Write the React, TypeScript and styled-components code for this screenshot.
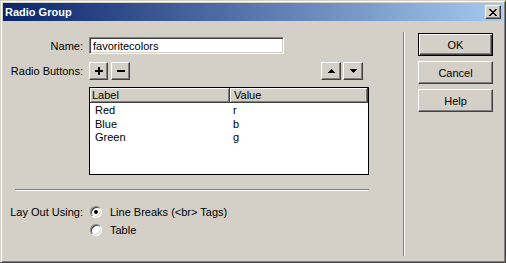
import React from "react";
import styled, { createGlobalStyle } from "styled-components";

const GlobalStyle = createGlobalStyle`
  html, body {
    margin: 0;
    padding: 0;
    background: #d4d0c8;
  }
  body {
    font-family: "Liberation Sans", Arial, sans-serif;
    font-size: 11px;
    color: #000;
  }
`;

const Window = styled.div`
  width: 506px;
  height: 263px;
  box-sizing: border-box;
  background: #d4d0c8;
  border: 1px solid;
  border-color: #d4d0c8 #404040 #404040 #d4d0c8;
  box-shadow: inset 1px 1px 0 #fff, inset -1px -1px 0 #808080;
  padding: 2px;
  display: flex;
  flex-direction: column;
`;

const TitleBar = styled.div`
  height: 18px;
  flex: 0 0 18px;
  display: flex;
  align-items: center;
  padding: 0 2px;
  background: linear-gradient(to right, #0a246a, #a6caf0);
  color: #fff;
  font-weight: bold;
  font-size: 11px;
`;

const Title = styled.span`
  flex: 1;
`;

const RaisedButton = styled.button`
  box-sizing: border-box;
  margin: 0;
  padding: 0;
  background: #d4d0c8;
  border: 1px solid;
  border-color: #fff #404040 #404040 #fff;
  box-shadow: inset -1px -1px 0 #808080;
  display: flex;
  align-items: center;
  justify-content: center;
  font: inherit;
  color: #000;
`;

const CloseButton = styled(RaisedButton)`
  width: 16px;
  height: 14px;
`;

const Body = styled.div`
  flex: 1;
  display: flex;
`;

const Main = styled.div`
  width: 400px;
  display: flex;
  flex-direction: column;
  padding-top: 16px;
`;

const Row = styled.div<{ $top?: number }>`
  display: flex;
  align-items: center;
  margin-top: ${(p) => p.$top ?? 0}px;
`;

const Label = styled.span`
  width: 80px;
  margin-right: 6px;
  text-align: right;
  white-space: nowrap;
`;

const TextField = styled.input`
  width: 195px;
  height: 17px;
  box-sizing: border-box;
  margin: 0;
  padding: 0 0 0 3px;
  background: #fff;
  border: 1px solid;
  border-color: #808080 #fff #fff #808080;
  box-shadow: inset 1px 1px 0 #404040, inset -1px -1px 0 #d4d0c8;
  font: inherit;
  color: #000;
  outline: none;
`;

const Controls = styled.div`
  width: 274px;
  display: flex;
  align-items: center;
`;

const ToolButton = styled(RaisedButton)<{ $w: number }>`
  width: ${(p) => p.$w}px;
  height: 18px;
  margin-right: ${(p) => (p.$w === 19 ? 3 : 2)}px;
  &:last-child {
    margin-right: 0;
  }
`;

const Spacer = styled.div`
  flex: 1;
`;

const Table = styled.div`
  margin: 7px 0 0 86px;
  width: 280px;
  height: 88px;
  box-sizing: border-box;
  border: 1px solid #000;
  background: #fff;
  display: flex;
  flex-direction: column;
`;

const HeaderRow = styled.div`
  display: flex;
  height: 15px;
  background: #d4d0c8;
`;

const HeaderCell = styled.div<{ $w?: number; $pad: number }>`
  box-sizing: border-box;
  ${(p) => (p.$w ? `width: ${p.$w}px;` : "flex: 1;")}
  height: 15px;
  line-height: 14px;
  padding-left: ${(p) => p.$pad}px;
  border-bottom: 1px solid #404040;
  border-right: 1px solid #404040;
  box-shadow: inset 1px 1px 0 #fff, inset -1px -1px 0 #808080;
`;

const Rows = styled.div`
  padding-top: 1px;
`;

const DataRow = styled.div`
  display: flex;
  height: 13.5px;
  line-height: 13.5px;
`;

const DataCell = styled.div<{ $w?: number; $pad: number }>`
  ${(p) => (p.$w ? `width: ${p.$w}px;` : "flex: 1;")}
  padding-left: ${(p) => p.$pad}px;
  box-sizing: border-box;
`;

const HLine = styled.div`
  margin: 14px 0 0 12px;
  width: 354px;
  height: 0;
  border-top: 1px solid #808080;
  border-bottom: 1px solid #fff;
`;

const LayoutRow = styled.div`
  display: flex;
  margin-top: 12px;
`;

const LayoutLabel = styled(Label)`
  height: 18px;
  line-height: 18px;
`;

const Options = styled.div`
  display: flex;
  flex-direction: column;
`;

const Option = styled.label`
  display: flex;
  align-items: center;
  height: 18px;
  padding-left: 1px;
`;

const RadioCircle = styled.span<{ $checked?: boolean }>`
  width: 12px;
  height: 12px;
  box-sizing: border-box;
  border-radius: 50%;
  border: 1px solid;
  border-color: #808080 #fff #fff #808080;
  background: #fff;
  box-shadow: inset 1px 1px 0 #404040, inset -1px -1px 0 #d4d0c8;
  display: flex;
  align-items: center;
  justify-content: center;
  margin-right: 8px;
  &::after {
    content: "";
    width: 4px;
    height: 4px;
    border-radius: 50%;
    background: #000;
    display: ${(p) => (p.$checked ? "block" : "none")};
  }
`;

const VLine = styled.div`
  margin: 11px 0 4px 0;
  width: 0;
  border-left: 1px solid #808080;
  border-right: 1px solid #fff;
`;

const ButtonColumn = styled.div`
  margin-left: 13px;
  padding-top: 12px;
  display: flex;
  flex-direction: column;
  gap: 5px;
`;

const DialogButton = styled(RaisedButton)<{ $default?: boolean }>`
  width: 75px;
  height: 23px;
  ${(p) =>
    p.$default
      ? `
    border: 1px solid #000;
    box-shadow: inset 1px 1px 0 #fff, inset -1px -1px 0 #404040, inset -2px -2px 0 #808080;
  `
      : ""}
`;

// pixel glyphs for the tiny buttons (not text)
const pixelPath = (rows: string[]) =>
  rows
    .flatMap((r, y) =>
      r.split("").map((c, x) => (c === "#" ? `M${x} ${y}h1v1h-1z` : ""))
    )
    .join("");

const Glyph = ({ rows }: { rows: string[] }) => (
  <svg
    width={rows[0].length}
    height={rows.length}
    viewBox={`0 0 ${rows[0].length} ${rows.length}`}
    shapeRendering="crispEdges"
  >
    <path d={pixelPath(rows)} fill="#000" />
  </svg>
);

const closeGlyph = [
  "##....##",
  ".##..##.",
  "..####..",
  "...##...",
  "..####..",
  ".##..##.",
  "##....##",
];

const plusGlyph = [
  "...##...",
  "...##...",
  "...##...",
  "########",
  "########",
  "...##...",
  "...##...",
  "...##...",
];

const minusGlyph = ["########", "########"];

const upGlyph = ["...#...", "..###..", ".#####.", "#######"];
const downGlyph = ["#######", ".#####.", "..###..", "...#..."];

const rows = [
  { label: "Red", value: "r" },
  { label: "Blue", value: "b" },
  { label: "Green", value: "g" },
];

export default function App() {
  return (
    <>
      <GlobalStyle />
      <Window>
        <TitleBar>
          <Title>Radio Group</Title>
          <CloseButton>
            <Glyph rows={closeGlyph} />
          </CloseButton>
        </TitleBar>
        <Body>
          <Main>
            <Row>
              <Label>Name:</Label>
              <TextField defaultValue="favoritecolors" readOnly />
            </Row>
            <Row $top={8}>
              <Label>Radio Buttons:</Label>
              <Controls>
                <ToolButton $w={19}>
                  <Glyph rows={plusGlyph} />
                </ToolButton>
                <ToolButton $w={19}>
                  <Glyph rows={minusGlyph} />
                </ToolButton>
                <Spacer />
                <ToolButton $w={20}>
                  <Glyph rows={upGlyph} />
                </ToolButton>
                <ToolButton $w={20}>
                  <Glyph rows={downGlyph} />
                </ToolButton>
              </Controls>
            </Row>
            <Table>
              <HeaderRow>
                <HeaderCell $w={140} $pad={2}>Label</HeaderCell>
                <HeaderCell $pad={4}>Value</HeaderCell>
              </HeaderRow>
              <Rows>
                {rows.map((r) => (
                  <DataRow key={r.value}>
                    <DataCell $w={140} $pad={5}>{r.label}</DataCell>
                    <DataCell $pad={3}>{r.value}</DataCell>
                  </DataRow>
                ))}
              </Rows>
            </Table>
            <HLine />
            <LayoutRow>
              <LayoutLabel>Lay Out Using:</LayoutLabel>
              <Options>
                <Option>
                  <RadioCircle $checked />
                  Line Breaks (&lt;br&gt; Tags)
                </Option>
                <Option>
                  <RadioCircle />
                  Table
                </Option>
              </Options>
            </LayoutRow>
          </Main>
          <VLine />
          <ButtonColumn>
            <DialogButton $default>OK</DialogButton>
            <DialogButton>Cancel</DialogButton>
            <DialogButton>Help</DialogButton>
          </ButtonColumn>
        </Body>
      </Window>
    </>
  );
}
